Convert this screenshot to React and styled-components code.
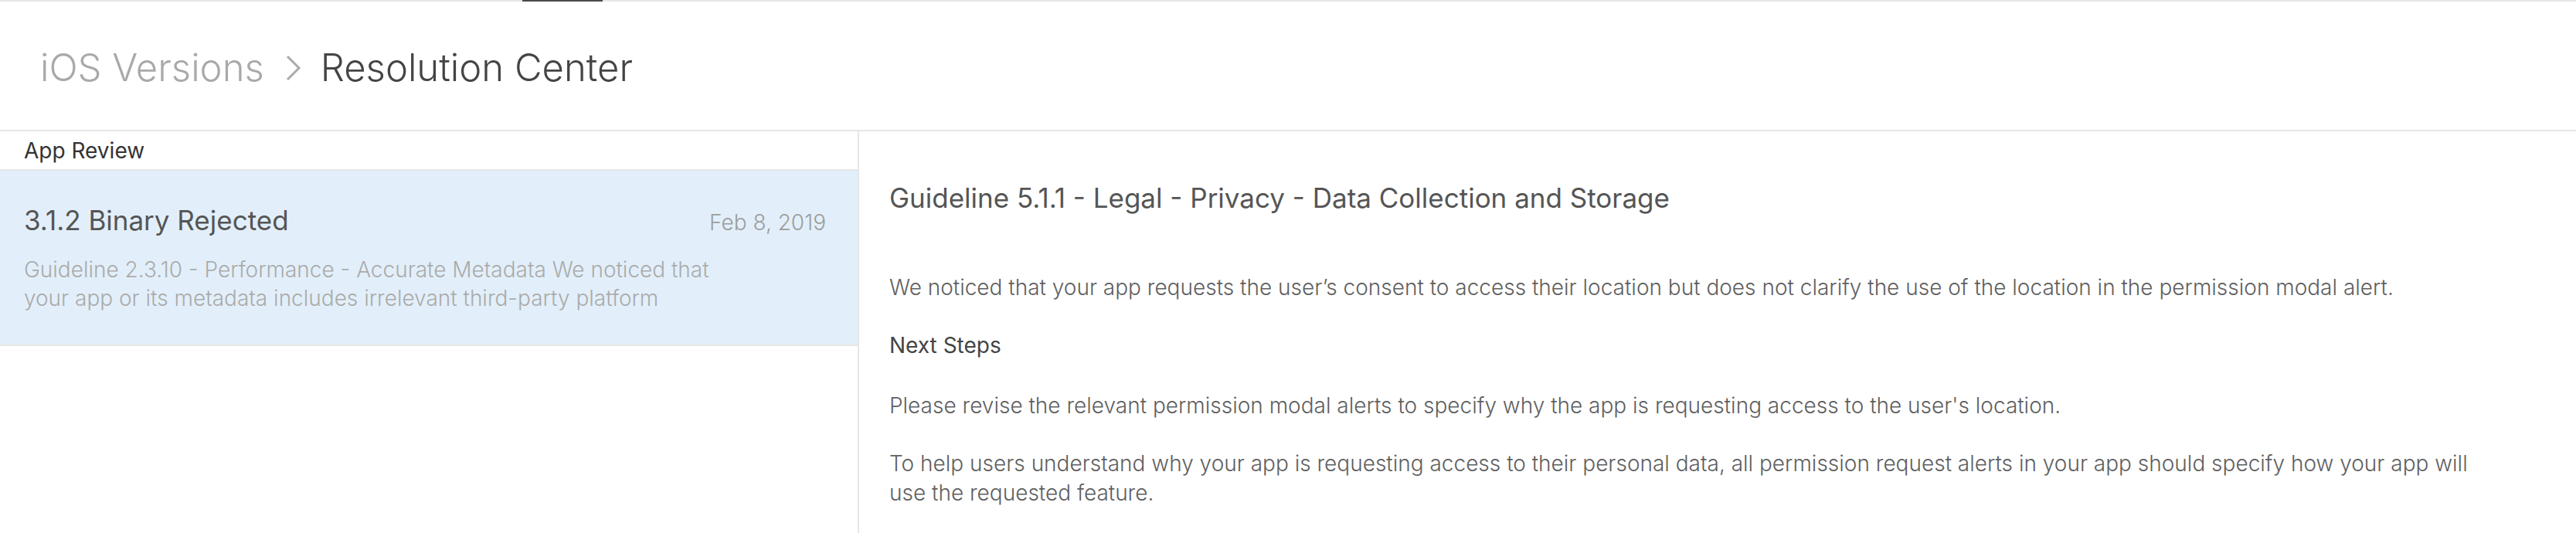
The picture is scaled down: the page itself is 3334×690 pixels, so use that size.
import styled, { createGlobalStyle } from 'styled-components'

const GlobalStyle = createGlobalStyle`
  html, body {
    margin: 0;
    padding: 0;
    background: #fff;
  }
  body {
    font-family: Inter, Roboto, "Liberation Sans", Arial, sans-serif;
    color: #444;
  }
  * { box-sizing: border-box; }
`

const TopBar = styled.div`
  height: 2px;
  background: #e6e6e6;
  padding-left: 676px;
`

const ActiveTab = styled.div`
  width: 104px;
  height: 2px;
  background: #4a4a4a;
`

const Header = styled.header`
  height: 168px;
  padding: 5px 0 0 52px;
  display: flex;
  align-items: center;
  border-bottom: 2px solid #e6e6e6;
  font-size: 49px;
  font-weight: 300;
`

const Crumb = styled.span`
  color: ${({ current }) => (current ? '#444' : '#a9a9a9')};
`

const Chevron = styled.svg`
  width: 20px;
  height: 34px;
  margin: 0 25px 0 28px;
  flex: none;
`

const Main = styled.div`
  display: flex;
  min-height: 520px;
`

const Sidebar = styled.aside`
  width: 1112px;
  flex: none;
  border-right: 2px solid #e6e6e6;
`

const SectionTitle = styled.div`
  height: 51px;
  padding: 6px 0 0 31px;
  font-size: 28px;
  line-height: 38px;
  font-weight: 400;
  color: #333;
  border-bottom: 2px solid #e6e6e6;
`

const Item = styled.div`
  height: 227px;
  padding: 44px 41px 0 31px;
  background: ${({ selected }) => (selected ? '#e2effa' : '#fff')};
  border-bottom: 2px solid #e6e6e6;
`

const ItemHead = styled.div`
  display: flex;
  justify-content: space-between;
  align-items: baseline;
`

const ItemTitle = styled.div`
  font-size: 35px;
  line-height: 40px;
  font-weight: 400;
  color: #555;
`

const ItemDate = styled.div`
  font-size: 28px;
  font-weight: 300;
  color: #9d9d9d;
`

const ItemBody = styled.p`
  margin: 26px 0 0;
  max-width: 940px;
  font-size: 28px;
  font-weight: 300;
  line-height: 37px;
  color: #ababab;
`

const Content = styled.section`
  flex: 1;
  padding: 66px 110px 0 39px;
`

const Heading = styled.h2`
  margin: 0 0 77px;
  font-size: 35px;
  line-height: 40px;
  font-weight: 400;
  color: #555;
`

const Para = styled.p`
  margin: 0 0 37px;
  font-size: 28px;
  font-weight: 300;
  line-height: 38px;
  color: #5f5f5f;
`

const SubHeading = styled.h3`
  margin: 0 0 40px;
  font-size: 28px;
  font-weight: 400;
  line-height: 38px;
  color: #444;
`

export default function App() {
  return (
    <>
      <GlobalStyle />
      <TopBar>
        <ActiveTab />
      </TopBar>
      <Header>
        <Crumb>iOS Versions</Crumb>
        <Chevron viewBox="0 0 20 34">
          <polyline points="2,2 17,17 2,32" fill="none" stroke="#ababab" strokeWidth="3" />
        </Chevron>
        <Crumb current>Resolution Center</Crumb>
      </Header>
      <Main>
        <Sidebar>
          <SectionTitle>App Review</SectionTitle>
          <Item selected>
            <ItemHead>
              <ItemTitle>3.1.2 Binary Rejected</ItemTitle>
              <ItemDate>Feb 8, 2019</ItemDate>
            </ItemHead>
            <ItemBody>
              Guideline 2.3.10 - Performance - Accurate Metadata We noticed that your app or its metadata includes irrelevant third-party platform
            </ItemBody>
          </Item>
        </Sidebar>
        <Content>
          <Heading>Guideline 5.1.1 - Legal - Privacy - Data Collection and Storage</Heading>
          <Para>
            We noticed that your app requests the user’s consent to access their location but does not clarify the use of the location in the permission modal alert.
          </Para>
          <SubHeading>Next Steps</SubHeading>
          <Para>
            Please revise the relevant permission modal alerts to specify why the app is requesting access to the user's location.
          </Para>
          <Para>
            To help users understand why your app is requesting access to their personal data, all permission request alerts in your app should specify how your app will use the requested feature.
          </Para>
        </Content>
      </Main>
    </>
  )
}
